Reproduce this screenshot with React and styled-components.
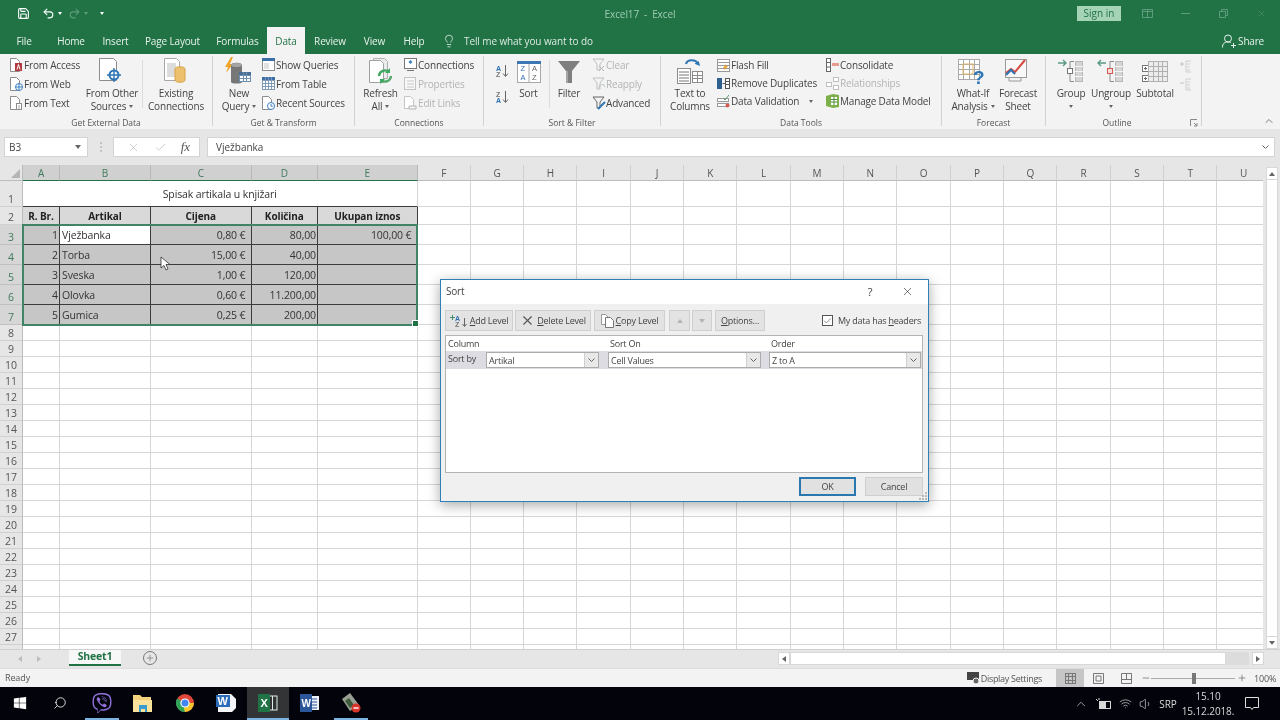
import React from "react";
import styled, { createGlobalStyle } from "styled-components";
import { Lightbulb, Undo2, Redo2, Search, ChevronUp, Wifi, Volume1, X, Check, Plus, Minus, Save } from "lucide-react";
import { FaWindows, FaViber } from "react-icons/fa";

const UI = `"Open Sans", "Noto Sans", sans-serif`;

const Global = createGlobalStyle`
  html, body { margin: 0; padding: 0; background: #fff; overflow: hidden; }
  * { box-sizing: border-box; }
  body { font-family: ${UI}; }
`;

const Page = styled.div`
  position: relative;
  width: 1280px;
  height: 720px;
  display: flex;
  flex-direction: column;
  overflow: hidden;
  color: #444;
  filter: blur(0.3px);
`;

/* title bar */
const TitleBar = styled.div`
  height: 27px;
  background: #217346;
  display: grid;
  grid-template-columns: 1fr auto 1fr;
  align-items: center;
`;
const Qat = styled.div`
  display: flex;
  align-items: center;
  padding-left: 17px;
  color: #fff;
`;
const QatGap = styled.span`
  width: 12px;
`;
const QatCaret = styled.span`
  width: 0;
  height: 0;
  margin: 0 ${(p) => p.$mr || 6}px 0 3px;
  border: 2px solid transparent;
  border-top: 3px solid ${(p) => p.$c || "#fff"};
  border-bottom: 0;
`;
const DocTitle = styled.div`
  font-size: 10px;
  color: #9fcbb2;
  letter-spacing: -0.1px;
`;
const WinBtns = styled.div`
  display: flex;
  align-items: center;
  justify-content: flex-end;
  color: #5d9c7c;
`;
const SignIn = styled.div`
  width: 44px;
  height: 15px;
  margin-right: 7px;
  background: #a4d3b6;
  color: #217346;
  font-size: 10px;
  line-height: 15px;
  text-align: center;
`;
const WinBtn = styled.div`
  width: 38px;
  display: flex;
  justify-content: center;
`;

/* tabs */
const TabBar = styled.div`
  height: 27px;
  background: #217346;
  display: flex;
  align-items: stretch;
`;
const Tab = styled.div`
  width: ${(p) => p.$w}px;
  display: flex;
  align-items: center;
  justify-content: center;
  font-size: 10px;
  letter-spacing: -0.15px;
  color: ${(p) => (p.$active ? "#217346" : "#e8f2ec")};
  background: ${(p) => (p.$active ? "#f3f3f3" : "transparent")};
`;
const TellMe = styled.div`
  display: flex;
  align-items: center;
  gap: 8px;
  padding-left: 8px;
  font-size: 10px;
  letter-spacing: -0.1px;
  color: #dcebe3;
`;
const Share = styled.div`
  margin-left: auto;
  padding-right: 16px;
  display: flex;
  align-items: center;
  gap: 2px;
  font-size: 10px;
  letter-spacing: -0.2px;
  color: #e8f2ec;
`;

/* ribbon */
const Ribbon = styled.div`
  height: 75px;
  background: #f3f3f3;
  display: flex;
  font-size: 10px;
  letter-spacing: -0.18px;
`;
const Group = styled.div`
  width: ${(p) => p.$w}px;
  height: 70px;
  margin-top: 2px;
  display: flex;
  flex-direction: column;
  border-right: 1px solid #d2d2d2;
`;
const GroupBody = styled.div`
  height: 59px;
  flex: none;
  display: flex;
  padding-left: ${(p) => p.$pl || 0}px;
`;
const GroupLabel = styled.div`
  position: relative;
  height: 14px;
  flex: none;
  padding-right: ${(p) => p.$pr || 0}px;
  line-height: 15px;
  text-align: center;
  font-size: 8.5px;
  letter-spacing: 0;
  color: #555;
`;
const Launcher = styled.span`
  position: absolute;
  right: 3px;
  top: 4px;
  display: flex;
`;
const Large = styled.div`
  width: ${(p) => p.$w}px;
  flex: none;
  display: flex;
  flex-direction: column;
  align-items: center;
  text-align: center;
  line-height: 13px;
  color: #444;
  white-space: nowrap;
`;
const LargeIcon = styled.div`
  height: 31px;
  flex: none;
  display: flex;
  align-items: center;
  justify-content: center;
`;
const LabelLine = styled.div`
  height: 13px;
  display: flex;
  align-items: center;
  justify-content: center;
`;
const Caret = styled.span`
  display: inline-block;
  width: 0;
  height: 0;
  margin-left: ${(p) => p.$ml ?? 3}px;
  border: 2px solid transparent;
  border-top: 3px solid #666;
  border-bottom: 0;
`;
const Stack = styled.div`
  width: ${(p) => p.$w}px;
  flex: none;
  margin-left: ${(p) => p.$ml || 0}px;
  margin-top: ${(p) => p.$mt || 0}px;
  display: flex;
  flex-direction: column;
`;
const SmallRow = styled.div`
  height: ${(p) => p.$h || 19}px;
  display: flex;
  align-items: center;
  gap: 1px;
  white-space: nowrap;
  color: ${(p) => (p.$off ? "#b4b4b4" : "#444")};
`;
const SmallIcon = styled.span`
  width: 13px;
  height: 14px;
  flex: none;
  display: flex;
  align-items: center;
  justify-content: center;
`;
const GroupSep = styled.div`
  width: ${(p) => p.$w}px;
  flex: none;
  display: flex;
  justify-content: center;
  &::after {
    content: "";
    width: 1px;
    height: 48px;
    margin-top: 4px;
    background: #dcdcdc;
  }
`;
const SortCol = styled.div`
  width: 13px;
  flex: none;
  display: flex;
  flex-direction: column;
  gap: 12px;
  padding-top: 8px;
`;
const OutlineSmall = styled.div`
  width: 16px;
  flex: none;
  display: flex;
  flex-direction: column;
  gap: 5px;
  padding-top: 4px;
`;
const RibbonEnd = styled.div`
  flex: 1;
  display: flex;
  align-items: flex-end;
  justify-content: flex-end;
  padding: 0 5px 0 0;
  height: 73px;
  color: #555;
`;

/* formula bar */
const FormulaWrap = styled.div`
  height: 36px;
  background: #e6e6e6;
  padding: 8px 5px 8px 4px;
  display: flex;
`;
const NameBox = styled.div`
  width: 84px;
  background: #fff;
  border: 1px solid #d4d4d4;
  font-size: 10px;
  padding: 0 6px 0 4px;
  display: flex;
  align-items: center;
  justify-content: space-between;
`;
const Dots = styled.div`
  width: 25px;
  display: flex;
  flex-direction: column;
  align-items: center;
  justify-content: center;
  gap: 2px;
  & i { width: 2px; height: 2px; background: #c4c4c4; display: block; }
`;
const FuncBox = styled.div`
  width: 87px;
  margin-right: 7px;
  background: #fff;
  border: 1px solid #d4d4d4;
  display: flex;
  align-items: center;
  justify-content: space-around;
  padding: 0 2px 0 6px;
  color: #bcbcbc;
`;
const Fx = styled.span`
  font-family: "Liberation Serif", serif;
  font-style: italic;
  font-size: 13px;
  color: #555;
`;
const FormulaInput = styled.div`
  flex: 1;
  background: #fff;
  border: 1px solid #d4d4d4;
  font-size: 10px;
  padding: 0 5px 0 8px;
  display: flex;
  align-items: center;
  justify-content: space-between;
`;

/* sheet */
const SheetArea = styled.div`
  flex: 1;
  display: flex;
  min-height: 0;
  background: #e6e6e6;
`;
const SheetScroll = styled.div`
  width: 1263px;
  overflow: hidden;
  background: #fff;
`;
const Sheet = styled.div`
  position: relative;
  display: grid;
  grid-template-columns: 23px 37px 91px 100.5px 66.5px 99.5px repeat(16, 53.33px);
  grid-template-rows: 16px 26px 17.5px repeat(5, 20px) repeat(21, 16px);
  font-size: 10.5px;
  letter-spacing: -0.12px;
`;
const ColHead = styled.div`
  background: ${(p) => (p.$sel ? "#d0d0d0" : "#e6e6e6")};
  border-right: 1px solid ${(p) => (p.$sel ? "#b8b8b8" : "#d0d0d0")};
  border-bottom: 1px solid ${(p) => (p.$sel ? "#217346" : "#bcbcbc")};
  color: ${(p) => (p.$sel ? "#3f7a5c" : "#555")};
  font-size: 10px;
  display: flex;
  align-items: center;
  justify-content: center;
`;
const Corner = styled.div`
  background: #e6e6e6;
  border-right: 1px solid #bcbcbc;
  border-bottom: 1px solid #bcbcbc;
  display: flex;
  align-items: flex-end;
  justify-content: flex-end;
  padding: 0 2px 2px 0;
`;
const RowHead = styled.div`
  background: ${(p) => (p.$sel ? "#d6d6d6" : "#e6e6e6")};
  border-right: 1px solid ${(p) => (p.$sel ? "#217346" : "#bcbcbc")};
  border-bottom: 1px solid ${(p) => (p.$sel ? "#c0c0c0" : "#d0d0d0")};
  color: ${(p) => (p.$sel ? "#3f7a5c" : "#555")};
  display: flex;
  align-items: flex-end;
  justify-content: center;
  line-height: 14px;
`;
const Cell = styled.div`
  border-right: 1px solid #d6d6d6;
  border-bottom: 1px solid #d6d6d6;
`;
const TitleCell = styled.div`
  grid-column: span 5;
  display: flex;
  align-items: center;
  justify-content: center;
  color: #333;
  border-bottom: 1px solid #3c3c3c;
  border-right: 1px solid #d6d6d6;
`;
const HeadCell = styled.div`
  background: #d9d9d9;
  border-right: 1px solid #3c3c3c;
  border-bottom: 1px solid #3c3c3c;
  font-size: 10px;
  font-weight: 700;
  color: #222;
  display: flex;
  align-items: center;
  justify-content: center;
  padding-top: 1px;
`;
const DataCell = styled.div`
  background: ${(p) => (p.$active ? "#fff" : "#c6c6c6")};
  border-right: 1px solid #3c3c3c;
  border-bottom: 1px solid #3c3c3c;
  color: #333;
  display: flex;
  align-items: center;
  justify-content: ${(p) => (p.$num ? "flex-end" : "flex-start")};
  padding: 1px ${(p) => (p.$money ? 5 : 1)}px 0 2px;
`;
const Selection = styled.div`
  position: absolute;
  grid-row: 4 / 9;
  grid-column: 2 / 7;
  inset: -1px 0 -1px -1px;
  border: 2px solid #3f8467;
  pointer-events: none;
  &::after {
    content: "";
    position: absolute;
    right: -3px;
    bottom: -3px;
    width: 5px;
    height: 5px;
    background: #217346;
    border: 1px solid #fff;
  }
`;
const VScroll = styled.div`
  flex: 1;
  padding: 2px 2px 0 3px;
  display: flex;
  flex-direction: column;
`;
const VThumb = styled.div`
  flex: 1;
  background: #fff;
  border: 1px solid #d8d8d8;
  border-top: 0;
  border-bottom: 0;
`;
const ArrowBtn = styled.div`
  height: 13px;
  flex: none;
  background: #fff;
  border: 1px solid #d8d8d8;
  display: flex;
  align-items: center;
  justify-content: center;
`;
const Tri = styled.span`
  width: 0;
  height: 0;
  border: 3px solid transparent;
  ${(p) => p.$dir === "up" && `border-top:0;border-bottom:4px solid ${p.$c || "#666"};`}
  ${(p) => p.$dir === "down" && `border-bottom:0;border-top:4px solid ${p.$c || "#666"};`}
  ${(p) => p.$dir === "left" && `border-left:0;border-right:4px solid ${p.$c || "#666"};`}
  ${(p) => p.$dir === "right" && `border-right:0;border-left:4px solid ${p.$c || "#666"};`}
`;

/* sheet tabs */
const SheetBar = styled.div`
  height: 19px;
  background: #e6e6e6;
  border-top: 1px solid #d0d0d0;
  display: flex;
  align-items: stretch;
`;
const TabNav = styled.div`
  width: 69px;
  display: flex;
  align-items: center;
  gap: 15px;
  padding-left: 18px;
`;
const SheetTab = styled.div`
  width: 52px;
  margin-bottom: 2px;
  background: #f7f7f7;
  border-bottom: 2px solid #217346;
  color: #217346;
  font-weight: 700;
  font-size: 10.5px;
  letter-spacing: -0.2px;
  text-align: center;
  line-height: 13px;
`;
const AddSheet = styled.div`
  width: 14px;
  height: 14px;
  margin: 1px 0 0 22px;
  border: 1px solid #777;
  border-radius: 50%;
  color: #666;
  display: flex;
  align-items: center;
  justify-content: center;
`;
const HScroll = styled.div`
  margin: 2px 16px 3px auto;
  width: 486px;
  display: flex;
  align-items: stretch;
`;
const HBtn = styled.div`
  width: 12px;
  margin-left: ${(p) => p.$ml || 0}px;
  background: #fff;
  border: 1px solid #d8d8d8;
  display: flex;
  align-items: center;
  justify-content: center;
`;
const HThumb = styled.div`
  flex: 1;
  background: #fff;
  border: 1px solid #d8d8d8;
`;
const HTrack = styled.div`
  width: 23px;
  background: #dcdcdc;
`;

/* status bar */
const StatusBar = styled.div`
  height: 19px;
  background: #f3f3f3;
  border-top: 1px solid #dcdcdc;
  display: flex;
  align-items: stretch;
  font-size: 9px;
  letter-spacing: -0.12px;
  color: #555;
`;
const Ready = styled.div`
  padding-left: 5px;
  line-height: 18px;
`;
const StatusRight = styled.div`
  margin-left: auto;
  display: flex;
  align-items: center;
`;
const DisplaySet = styled.div`
  display: flex;
  align-items: center;
  gap: 1px;
  margin-right: 14px;
  letter-spacing: -0.3px;
`;
const ViewBtn = styled.div`
  width: 28px;
  height: 18px;
  background: ${(p) => (p.$on ? "#c6c6c6" : "transparent")};
  display: flex;
  align-items: center;
  justify-content: center;
`;
const Slider = styled.div`
  width: 84px;
  height: 1px;
  background: #aaa;
  position: relative;
  margin: 0 2px 0 0;
  & i {
    position: absolute;
    left: 41px;
    top: -5px;
    width: 4px;
    height: 11px;
    background: #777;
  }
`;
const ZoomOut = styled.span`
  display: flex;
  margin-left: 1px;
`;
const Zoom = styled.div`
  width: 33px;
  padding-left: 7px;
`;

/* taskbar */
const Taskbar = styled.div`
  height: 33px;
  background: #03040b;
  display: flex;
  align-items: stretch;
  color: #fff;
`;
const TaskItem = styled.div`
  width: ${(p) => p.$w || 41.5}px;
  flex: none;
  display: flex;
  flex-direction: column;
  align-items: center;
  background: ${(p) => (p.$active ? "#333436" : "transparent")};
`;
const TaskIcon = styled.div`
  flex: 1;
  display: flex;
  align-items: center;
  justify-content: center;
`;
const MirroredSearch = styled(Search)`
  transform: scaleX(-1);
`;
const TaskLine = styled.div`
  height: 2px;
  width: ${(p) => (p.$full ? "100%" : "34px")};
  background: ${(p) => (p.$show ? "#7db4df" : "transparent")};
`;
const Tray = styled.div`
  margin-left: auto;
  display: flex;
  align-items: center;
  color: #d8d8d8;
  font-size: 10px;
`;
const TraySlot = styled.div`
  width: ${(p) => p.$w}px;
  display: flex;
  justify-content: center;
  align-items: center;
`;
const Clock = styled.div`
  width: 56px;
  text-align: center;
  line-height: 15px;
  font-size: 10px;
  letter-spacing: -0.1px;
`;

/* sort dialog */
const Dialog = styled.div`
  position: absolute;
  left: 440px;
  top: 279px;
  width: 489px;
  height: 223px;
  background: #f0f0f0;
  border: 1px solid #2e80b8;
  box-shadow: 0 3px 12px rgba(0, 0, 0, 0.35);
  font-size: 9px;
  letter-spacing: -0.22px;
  color: #444;
  display: flex;
  flex-direction: column;
`;
const DialogTitle = styled.div`
  height: 24px;
  flex: none;
  background: #fff;
  display: flex;
  align-items: center;
  padding: 0 14px 2px 5px;
  font-size: 10px;
  & span:first-child { flex: 1; }
`;
const HelpMark = styled.span`
  width: 20px;
  margin-right: 21px;
  text-align: center;
  font-size: 11px;
`;
const DlgToolbar = styled.div`
  height: 21px;
  flex: none;
  margin: 6px 7px 0 4px;
  display: flex;
  gap: 2px;
  align-items: stretch;
`;
const DlgBtn = styled.div`
  width: ${(p) => p.$w}px;
  margin-left: ${(p) => p.$ml || 0}px;
  flex: none;
  background: #e3e3e3;
  border: 1px solid #cfcfcf;
  display: flex;
  align-items: center;
  justify-content: center;
  gap: 2px;
  white-space: nowrap;
`;
const HeaderCheck = styled.label`
  margin-left: auto;
  display: flex;
  align-items: center;
  gap: 5px;
`;
const CheckBox = styled.span`
  width: 11px;
  height: 11px;
  background: #fff;
  border: 1px solid #555;
  display: flex;
  align-items: center;
  justify-content: center;
`;
const ListBox = styled.div`
  height: 138px;
  flex: none;
  margin: 4px 5px 0 4px;
  background: #fff;
  border: 1px solid #b4b4b4;
`;
const LevelHead = styled.div`
  display: flex;
  height: 15px;
`;
const ColLabel = styled.div`
  width: ${(p) => p.$w}px;
  padding: 1px 0 0 2px;
  line-height: 14px;
`;
const LevelRow = styled.div`
  background: #dcdce2;
  height: 18px;
  display: flex;
  padding-top: 1px;
`;
const RowName = styled.div`
  width: 40px;
  padding-left: 2px;
  line-height: 13px;
`;
const Combo = styled.div`
  width: ${(p) => p.$w}px;
  margin-left: ${(p) => p.$ml || 0}px;
  height: 16px;
  background: #fff;
  border: 1px solid #ababab;
  padding-left: 2px;
  display: flex;
  align-items: center;
  justify-content: space-between;
  & b {
    width: 14px;
    height: 14px;
    background: #e8e8e8;
    border-left: 1px solid #cfcfcf;
    display: flex;
    align-items: center;
    justify-content: center;
    font-weight: 400;
    color: #666;
  }
`;
const DlgFooter = styled.div`
  position: relative;
  flex: 1;
  display: flex;
  justify-content: flex-end;
  gap: 9px;
  padding: 4px 5px 0 0;
`;
const FootBtn = styled.div`
  width: ${(p) => p.$w}px;
  height: 19px;
  background: #e1e1e1;
  border: ${(p) => (p.$def ? "2px solid #2a78ad" : "1px solid #cfcfcf")};
  display: flex;
  align-items: center;
  justify-content: center;
`;
const Grip = styled.svg`
  position: absolute;
  right: 1px;
  bottom: 1px;
`;
const Cursor = styled.svg`
  position: absolute;
  left: 160px;
  top: 256px;
`;

/* drawings */
const Drawing = styled.svg`
  display: block;
  overflow: visible;
`;
const Svg = ({ w, h, children }) => (
  <Drawing width={w} height={h} viewBox={`0 0 ${w} ${h}`}>
    {children}
  </Drawing>
);
const Page2 = ({ x = 0, y = 0, w = 10, h = 13, f = "#fff", s = "#8c8c8c" }) => (
  <path d={`M${x + 0.5} ${y + 0.5}h${w - 3}l3 3v${h - 3}h-${w}z`} fill={f} stroke={s} />
);
const TableGrid = ({ x, y, w, h, cols, rows, s = "#8c8c8c", head, f = "#fff" }) => {
  const lines = [];
  for (let i = 1; i < cols; i++) {
    const px = x + Math.round((w / cols) * i) + 0.5;
    lines.push(<path key={"c" + i} d={`M${px} ${y}v${h}`} stroke={s} />);
  }
  for (let i = 1; i < rows; i++) {
    const py = y + Math.round((h / rows) * i) + 0.5;
    lines.push(<path key={"r" + i} d={`M${x} ${py}h${w}`} stroke={s} />);
  }
  return (
    <g>
      <rect x={x + 0.5} y={y + 0.5} width={w} height={h} fill={f} stroke={s} />
      {head && <rect x={x} y={y} width={w + 1} height={3} fill={head} />}
      {lines}
    </g>
  );
};
const Funnel = ({ c = "#8a8a8a" }) => <path d="M1 1h11L8 6v6H5V6z" fill="none" stroke={c} />;
const FromAccessIcon = () => (
  <Svg w={13} h={14}><Page2 w={9} h={13} /><rect x="5" y="5" width="7" height="8" fill="#b23a3f" /><path d="M7 11.5l1.5-5 1.5 5" stroke="#fff" fill="none" /></Svg>
);
const FromWebIcon = () => (
  <Svg w={13} h={14}><Page2 w={9} h={13} /><circle cx="9" cy="10" r="3.5" fill="#fff" stroke="#3b7ec0" /><path d="M5.5 10h7M9 6.5v7" stroke="#3b7ec0" /></Svg>
);
const FromTextIcon = () => (
  <Svg w={13} h={14}><Page2 w={9} h={13} /><rect x="6.5" y="7.5" width="5" height="6" fill="#fff" stroke="#8c8c8c" /><path d="M8 10h2M8 12h2" stroke="#aaa" /></Svg>
);
const FromOtherIcon = () => (
  <Svg w={28} h={30}>
    <Page2 x={1} y={1} w={17} h={22} />
    <circle cx="16" cy="18" r="4.5" fill="#fff" stroke="#2e75b5" strokeWidth="2" />
    <path d="M16 11v14M9 18h14" stroke="#2e75b5" strokeWidth="1.4" />
  </Svg>
);
const ExistingIcon = () => (
  <Svg w={26} h={30}>
    <Page2 x={1} y={1} w={15} h={22} s="#a8a8a8" />
    <rect x="4" y="6" width="9" height="14" fill="#dcdcdc" />
    <path d="M12 12c0-3 10-3 10 0v11c0 3-10 3-10 0z" fill="#edc06e" stroke="#d7a248" />
  </Svg>
);
const NewQueryIcon = () => (
  <Svg w={30} h={30}>
    <path d="M7 0L1 10h3l-2 6 7-9H6l3-7z" fill="#eea62a" />
    <path d="M7 8c0-3 11-3 11 0v17c0 2-11 2-11 0z" fill="#777" />
    <ellipse cx="12.5" cy="8" rx="5.5" ry="2" fill="#a5a5a5" />
    <TableGrid x={15} y={15} w={11} h={9} cols={3} rows={3} s="#6d8fb0" head="#4a6f96" />
  </Svg>
);
const ShowQueriesIcon = () => (
  <Svg w={13} h={13}><rect x=".5" y=".5" width="12" height="12" fill="#fff" stroke="#8c8c8c" /><rect x="0" y="0" width="13" height="3" fill="#3b6ea5" /><rect x="2" y="5" width="5" height="6" fill="#e2e2e2" /></Svg>
);
const FromTableIcon = () => <Svg w={13} h={13}><TableGrid x={0} y={0} w={12} h={12} cols={4} rows={4} s="#7f9ab8" head="#3b6ea5" /></Svg>;
const RecentIcon = () => (
  <Svg w={13} h={14}><Page2 w={9} h={13} /><circle cx="9" cy="10" r="3.5" fill="#fff" stroke="#3b7ec0" /><path d="M9 8v2.2h1.8" stroke="#3b7ec0" fill="none" /></Svg>
);
const RefreshIcon = () => (
  <Svg w={26} h={30}>
    <Page2 x={5} y={1} w={14} h={20} s="#b0b0b0" f="#ececec" />
    <Page2 x={1} y={3} w={14} h={22} s="#a0a0a0" />
    <path d="M11 19a6 6 0 0 1 10-4" fill="none" stroke="#3fa85f" strokeWidth="2.4" />
    <path d="M23 19a6 6 0 0 1-10 4" fill="none" stroke="#52a86b" strokeWidth="2.4" />
    <path d="M22 11v5h-5zM12 27v-5h5z" fill="#3fa85f" />
  </Svg>
);
const ConnIcon = () => (
  <Svg w={13} h={13}><rect x=".5" y=".5" width="12" height="10" fill="#fff" stroke="#777" /><path d="M6.5 2l2 2-2 2-2-2z" fill="#3b7ec0" /><path d="M3 12.5h7" stroke="#777" /></Svg>
);
const PropIcon = () => (
  <Svg w={13} h={13}><rect x=".5" y=".5" width="11" height="12" fill="#f8f8f8" stroke="#c4c4c4" /><path d="M3 4h7M3 7h7M3 10h7" stroke="#c8c8c8" /></Svg>
);
const EditLinksIcon = () => (
  <Svg w={13} h={14}><Page2 w={9} h={12} s="#c4c4c4" /><path d="M5 10h7v3H5z" fill="#f3f3f3" stroke="#b4b4b4" /></Svg>
);
const Letters = ({ a, b, up, x = 0 }) => (
  <g fontFamily="Liberation Sans, sans-serif" fontSize="7" fontWeight="700">
    <text x={x} y="6.5" fill={up ? "#777" : "#2f6fb5"}>{a}</text>
    <text x={x} y="13" fill={up ? "#2f6fb5" : "#777"}>{b}</text>
  </g>
);
const SortAZ = ({ z }) => (
  <Svg w={14} h={14}>
    <Letters a={z ? "Z" : "A"} b={z ? "A" : "Z"} up={z} />
    <path d="M9.5 1v11M7 9.5l2.5 3 2.5-3" fill="none" stroke="#666" />
  </Svg>
);
const SortLarge = () => (
  <Svg w={24} h={22}>
    <rect x=".5" y=".5" width="23" height="21" fill="#fff" stroke="#a8a8a8" />
    <rect x="0" y="0" width="24" height="3" fill="#3d77b3" />
    <path d="M12 3v19" stroke="#a8a8a8" />
    <g fontFamily="Liberation Sans, sans-serif" fontSize="7.5">
      <text x="3.5" y="10" fill="#2f6fb5">Z</text><text x="3.5" y="19" fill="#2f6fb5">A</text>
      <text x="15" y="10" fill="#666">A</text><text x="15" y="19" fill="#666">Z</text>
    </g>
  </Svg>
);
const FilterLarge = () => (
  <Svg w={24} h={24}>
    <path d="M1 1h22L15 11v12H9V11z" fill="#7f7f7f" />
    <path d="M9 11h2v12H9z" fill="#a5a5a5" />
  </Svg>
);
const ClearIcon = () => (
  <Svg w={14} h={14}><Funnel c="#c0c0c0" /><path d="M7 8l5 5M12 8l-5 5" stroke="#b4b4b4" /></Svg>
);
const ReapplyIcon = () => (
  <Svg w={14} h={14}><Funnel c="#c0c0c0" /><path d="M7 11a3 3 0 0 1 6-1" fill="none" stroke="#b8c8b8" /></Svg>
);
const AdvancedIcon = () => (
  <Svg w={14} h={14}><Funnel c="#666" /><path d="M6 13l7-7" stroke="#2e75b5" strokeWidth="2" /></Svg>
);
const TextColumnsIcon = () => (
  <Svg w={30} h={30}>
    <path d="M11 7c1-5 10-5 12 0" fill="none" stroke="#2e75b5" strokeWidth="2" />
    <path d="M20 8h6l-3-4z" fill="#2e75b5" transform="rotate(20 23 6)" />
    <rect x="2.5" y="11.5" width="13" height="15" fill="#fff" stroke="#8c8c8c" />
    <path d="M4 15h10M4 18h10M4 21h10M4 24h10" stroke="#777" />
    <TableGrid x={17} y={14} w={10} h={11} cols={2} rows={3} s="#8c8c8c" />
  </Svg>
);
const FlashIcon = () => (
  <Svg w={13} h={13}><TableGrid x={0} y={0} w={12} h={12} cols={1} rows={4} s="#999" /><path d="M9 5L6 9h2l-1 3 4-5H9z" fill="#eea62a" /></Svg>
);
const RemoveDupIcon = () => (
  <Svg w={13} h={13}><rect x="0" y="1" width="5" height="11" fill="#2f5f8f" /><rect x="8.5" y="1.5" width="4" height="10" fill="#fff" stroke="#555" /><path d="M9 4.5h3M9 7.5h3M5.5 6.5h3" stroke="#555" /></Svg>
);
const ValidationIcon = () => (
  <Svg w={13} h={13}><rect x=".5" y="3.5" width="11" height="3" fill="#fff" stroke="#999" /><rect x=".5" y="8.5" width="11" height="3" fill="#fff" stroke="#999" /><path d="M6 3l2 2 4-5" fill="none" stroke="#55a06e" /><circle cx="10.5" cy="10.5" r="2" fill="#d75b4c" /></Svg>
);
const ConsolidateIcon = () => (
  <Svg w={13} h={14}><rect x=".5" y=".5" width="4" height="13" fill="#fff" stroke="#666" /><path d="M1 4.5h3M1 9h3" stroke="#666" /><rect x="6" y="5" width="7" height="3" fill="#e69b93" /></Svg>
);
const RelationIcon = () => (
  <Svg w={13} h={13}><rect x=".5" y="5.5" width="5" height="4" fill="#fff" stroke="#c0c0c0" /><rect x="7.5" y=".5" width="5" height="4" fill="#fff" stroke="#c0c0c0" /><rect x="7.5" y="8.5" width="5" height="4" fill="#fff" stroke="#c0c0c0" /></Svg>
);
const ModelIcon = () => (
  <Svg w={13} h={14}><path d="M0 2l7-2 6 1v12l-6 1-7-2z" fill="#7db04b" /><rect x="5" y="3" width="6" height="8" fill="#fff" /><path d="M5 5.5h6M5 8h6M8 3v8" stroke="#4d8a3a" /></Svg>
);
const WhatIfIcon = () => (
  <Svg w={30} h={30}>
    <TableGrid x={0} y={2} w={21} h={20} cols={4} rows={4} s="#a8a8a8" />
    <rect x="5" y="7" width="10" height="10" fill="none" stroke="#e5b567" />
    <text x="15" y="27" fontFamily="Liberation Sans, sans-serif" fontSize="19" fontWeight="700" fill="#2e75b5">?</text>
  </Svg>
);
const ForecastIcon = () => (
  <Svg w={26} h={28}>
    <rect x=".5" y="1.5" width="21" height="18" fill="#f8f8f8" stroke="#9a9a9a" />
    <path d="M1 15l5-4 4 3 5-6 5-6" fill="none" stroke="#d24b3e" strokeWidth="2" />
    <path d="M1 17l5-5 4 4" fill="none" stroke="#2e75b5" strokeWidth="2" />
    <path d="M4 20v3h12v-3" fill="none" stroke="#9a9a9a" />
  </Svg>
);
const Beads = ({ x }) => (
  <g>
    <rect x={x + 0.5} y="1.5" width="7" height="20" fill="#d5d5d5" stroke="#b8b8b8" />
    <path d={`M${x} 6.5h8M${x} 11.5h8M${x} 16.5h8`} stroke="#f3f3f3" />
  </g>
);
const GroupIcon = () => (
  <Svg w={26} h={24}>
    <path d="M0 3h8M5 0l3 3-3 3" fill="none" stroke="#5b9a86" strokeWidth="1.4" />
    <path d="M16 1.5h-4v20h4" fill="none" stroke="#8c8c8c" />
    <rect x="9.5" y="8.5" width="5" height="5" fill="#fff" stroke="#777" />
    <Beads x={17} />
  </Svg>
);
const UngroupIcon = () => (
  <Svg w={26} h={24}>
    <path d="M8 3H0M3 0L0 3l3 3" fill="none" stroke="#5b9a86" strokeWidth="1.4" />
    <path d="M16 1.5h-4v20h4" fill="none" stroke="#8c8c8c" />
    <rect x="9.5" y="8.5" width="5" height="5" fill="#f8dede" stroke="#d0584d" />
    <Beads x={17} />
  </Svg>
);
const SubtotalIcon = () => (
  <Svg w={26} h={24}>
    <rect x="0.5" y="5.5" width="6" height="6" fill="#fff" stroke="#777" />
    <rect x="0.5" y="15.5" width="6" height="6" fill="#fff" stroke="#777" />
    <TableGrid x={6} y={1} w={19} h={20} cols={4} rows={4} s="#b0b0b0" f="#ececec" />
    <path d="M2 8.5h3M3.5 7v3M2 18.5h3M3.5 17v3" stroke="#666" />
  </Svg>
);
const DetailIcon = ({ minus }) => (
  <Svg w={13} h={13}>
    <path d={minus ? "M1 5h4" : "M1 4h4M3 2v4"} stroke="#c4c4c4" />
    <path d="M12 1H7v11h5M8 4h3M8 7h3M8 10h3" fill="none" stroke="#cfcfcf" />
  </Svg>
);
const ChromeIcon = () => (
  <Svg w={20} h={20}>
    <circle cx="10" cy="10" r="9" fill="#e0473b" />
    <path d="M10 10L2.2 5.5A9 9 0 0 0 10 19l4.5-7.8z" fill="#2fa35a" />
    <path d="M10 10h9a9 9 0 0 1-9 9l-1-3z" fill="#f6c62c" />
    <circle cx="10" cy="10" r="4.6" fill="#fff" />
    <circle cx="10" cy="10" r="3.5" fill="#4285f4" />
  </Svg>
);
const FolderIcon = () => (
  <Svg w={20} h={18}>
    <path d="M0 1h7l2 2h9v15H0z" fill="#f4d27b" />
    <rect x="0" y="6" width="19" height="12" fill="#fbe29a" />
    <path d="M6 11h8v7h-2v-3H8v3H6z" fill="#3a9bd0" />
  </Svg>
);
const WordOldIcon = () => (
  <Svg w={20} h={18}>
    <path d="M2 0h13l5 5v9l-4 4H2z" fill="#f4f6fa" />
    <rect x="0" y="1" width="14" height="12" fill="#2b6cb8" />
    <text x="1.5" y="11" fontFamily="Liberation Sans, sans-serif" fontSize="11" fontWeight="700" fill="#fff">W</text>
  </Svg>
);
const ExcelIcon = () => (
  <Svg w={19} h={18}>
    <rect x="10" y="2" width="9" height="14" fill="none" stroke="#dfeee5" />
    <path d="M14.5 2v14" stroke="#dfeee5" />
    <rect x="0" y="0" width="12" height="18" fill="#1f7345" />
    <text x="2.5" y="13" fontFamily="Liberation Sans, sans-serif" fontSize="11" fontWeight="700" fill="#fff">X</text>
  </Svg>
);
const WordIcon = () => (
  <Svg w={19} h={18}>
    <rect x="9" y="2" width="10" height="14" fill="#eef2f8" />
    <path d="M11 5h6M11 8h6M11 11h6M11 14h6" stroke="#2b579a" />
    <rect x="0" y="0" width="12" height="18" fill="#2b579a" />
    <text x="1.5" y="13" fontFamily="Liberation Sans, sans-serif" fontSize="10" fontWeight="700" fill="#fff">W</text>
  </Svg>
);
const AppIcon = () => (
  <Svg w={20} h={20}>
    <path d="M9 0l9 12-9 6-8-12z" fill="#9a9f93" />
    <path d="M8 5l5 7-4 3-5-7z" fill="#3c5a3a" />
    <circle cx="15" cy="15" r="4.5" fill="#d9352b" />
    <path d="M12.5 15h5" stroke="#fff" strokeWidth="1.4" />
  </Svg>
);
const BatteryIcon = () => (
  <Svg w={15} h={12}>
    <rect x="3.5" y="3.5" width="11" height="7" fill="none" stroke="#d8d8d8" />
    <rect x="4" y="4" width="6" height="6" fill="#d8d8d8" />
    <path d="M0 1l2 2M3 0v2" stroke="#d8d8d8" />
  </Svg>
);
const NotifyIcon = () => (
  <Svg w={14} h={14}><path d="M.5.5h13v10H8.5L7 12.5 5.5 10.5h-5z" fill="none" stroke="#e0e0e0" /></Svg>
);
const ChevronSm = () => (
  <Svg w={7} h={4}><path d="M.5.5L3.5 3.5 6.5.5" fill="none" stroke="#666" /></Svg>
);

const COLS = "ABCDEFGHIJKLMNOPQRSTU".split("");
const HEADERS = ["R. Br.", "Artikal", "Cijena", "Količina", "Ukupan iznos"];
const DATA = [
  ["1", "Vježbanka", "0,80 €", "80,00", "100,00 €"],
  ["2", "Torba", "15,00 €", "40,00", ""],
  ["3", "Sveska", "1,00 €", "120,00", ""],
  ["4", "Olovka", "0,60 €", "11.200,00", ""],
  ["5", "Gumica", "0,25 €", "200,00", ""],
];

const blanks = (row, from = 0) =>
  COLS.slice(from).map((c) => <Cell key={c + row} />);

function Grid() {
  const rows = [];
  for (let r = 8; r <= 28; r++) {
    rows.push(
      <React.Fragment key={r}>
        <RowHead>{r <= 27 ? r : ""}</RowHead>
        {blanks(r)}
      </React.Fragment>
    );
  }
  return (
    <Sheet>
      <Corner>
        <Svg w={9} h={9}><path d="M9 0v9H0z" fill="#b4b4b4" /></Svg>
      </Corner>
      {COLS.map((c, i) => (
        <ColHead key={c} $sel={i < 5}>{c}</ColHead>
      ))}
      <RowHead>1</RowHead>
      <TitleCell>Spisak artikala u knjižari</TitleCell>
      {blanks(1, 5)}
      <RowHead>2</RowHead>
      {HEADERS.map((h) => (
        <HeadCell key={h}>{h}</HeadCell>
      ))}
      {blanks(2, 5)}
      {DATA.map((d, i) => (
        <React.Fragment key={d[0]}>
          <RowHead $sel>{i + 3}</RowHead>
          {d.map((v, j) => (
            <DataCell key={j} $num={j !== 1} $money={v.includes("€")} $active={i === 0 && j === 1}>{v}</DataCell>
          ))}
          {blanks(i + 3, 5)}
        </React.Fragment>
      ))}
      {rows}
      <Selection />
    </Sheet>
  );
}

const Small = ({ icon, off, h, children }) => (
  <SmallRow $off={off} $h={h}>
    <SmallIcon>{icon}</SmallIcon>
    {children}
  </SmallRow>
);

function RibbonBar() {
  return (
    <Ribbon>
      <Group $w={213}>
        <GroupBody $pl={10}>
          <Stack $w={76} $mt={-1}>
            <Small icon={<FromAccessIcon />}>From Access</Small>
            <Small icon={<FromWebIcon />}>From Web</Small>
            <Small icon={<FromTextIcon />}>From Text</Small>
          </Stack>
          <Large $w={52}>
            <LargeIcon><FromOtherIcon /></LargeIcon>
            <LabelLine>From Other</LabelLine>
            <LabelLine>Sources<Caret /></LabelLine>
          </Large>
          <GroupSep $w={8} />
          <Large $w={60}>
            <LargeIcon><ExistingIcon /></LargeIcon>
            <LabelLine>Existing</LabelLine>
            <LabelLine>Connections</LabelLine>
          </Large>
        </GroupBody>
        <GroupLabel>Get External Data</GroupLabel>
      </Group>
      <Group $w={142}>
        <GroupBody $pl={3}>
          <Large $w={46}>
            <LargeIcon><NewQueryIcon /></LargeIcon>
            <LabelLine>New</LabelLine>
            <LabelLine>Query<Caret /></LabelLine>
          </Large>
          <Stack $w={90} $mt={-1}>
            <Small icon={<ShowQueriesIcon />}>Show Queries</Small>
            <Small icon={<FromTableIcon />}>From Table</Small>
            <Small icon={<RecentIcon />}>Recent Sources</Small>
          </Stack>
        </GroupBody>
        <GroupLabel>Get &amp; Transform</GroupLabel>
      </Group>
      <Group $w={129}>
        <GroupBody $pl={2}>
          <Large $w={47}>
            <LargeIcon><RefreshIcon /></LargeIcon>
            <LabelLine>Refresh</LabelLine>
            <LabelLine>All<Caret /></LabelLine>
          </Large>
          <Stack $w={76} $mt={-1}>
            <Small icon={<ConnIcon />}>Connections</Small>
            <Small icon={<PropIcon />} off>Properties</Small>
            <Small icon={<EditLinksIcon />} off>Edit Links</Small>
          </Stack>
        </GroupBody>
        <GroupLabel>Connections</GroupLabel>
      </Group>
      <Group $w={177}>
        <GroupBody $pl={12}>
          <SortCol>
            <SortAZ />
            <SortAZ z />
          </SortCol>
          <Large $w={39}>
            <LargeIcon><SortLarge /></LargeIcon>
            <LabelLine>Sort</LabelLine>
          </Large>
          <GroupSep $w={2} />
          <Large $w={38}>
            <LargeIcon><FilterLarge /></LargeIcon>
            <LabelLine>Filter</LabelLine>
          </Large>
          <Stack $w={66} $ml={4} $mt={-1}>
            <Small icon={<ClearIcon />} off>Clear</Small>
            <Small icon={<ReapplyIcon />} off>Reapply</Small>
            <Small icon={<AdvancedIcon />}>Advanced</Small>
          </Stack>
        </GroupBody>
        <GroupLabel>Sort &amp; Filter</GroupLabel>
      </Group>
      <Group $w={281}>
        <GroupBody $pl={4}>
          <Large $w={50}>
            <LargeIcon><TextColumnsIcon /></LargeIcon>
            <LabelLine>Text to</LabelLine>
            <LabelLine>Columns</LabelLine>
          </Large>
          <Stack $w={109} $ml={2}>
            <Small h={18} icon={<FlashIcon />}>Flash Fill</Small>
            <Small h={18} icon={<RemoveDupIcon />}>Remove Duplicates</Small>
            <Small h={18} icon={<ValidationIcon />}>Data Validation<Caret $ml={9} /></Small>
          </Stack>
          <Stack $w={112}>
            <Small h={18} icon={<ConsolidateIcon />}>Consolidate</Small>
            <Small h={18} icon={<RelationIcon />} off>Relationships</Small>
            <Small h={18} icon={<ModelIcon />}>Manage Data Model</Small>
          </Stack>
        </GroupBody>
        <GroupLabel>Data Tools</GroupLabel>
      </Group>
      <Group $w={104}>
        <GroupBody $pl={6}>
          <Large $w={50}>
            <LargeIcon><WhatIfIcon /></LargeIcon>
            <LabelLine>What-If</LabelLine>
            <LabelLine>Analysis<Caret /></LabelLine>
          </Large>
          <Large $w={40}>
            <LargeIcon><ForecastIcon /></LargeIcon>
            <LabelLine>Forecast</LabelLine>
            <LabelLine>Sheet</LabelLine>
          </Large>
        </GroupBody>
        <GroupLabel>Forecast</GroupLabel>
      </Group>
      <Group $w={156}>
        <GroupBody $pl={5}>
          <Large $w={40}>
            <LargeIcon><GroupIcon /></LargeIcon>
            <LabelLine>Group</LabelLine>
            <LabelLine><Caret $ml={0} /></LabelLine>
          </Large>
          <Large $w={40}>
            <LargeIcon><UngroupIcon /></LargeIcon>
            <LabelLine>Ungroup</LabelLine>
            <LabelLine><Caret $ml={0} /></LabelLine>
          </Large>
          <Large $w={48}>
            <LargeIcon><SubtotalIcon /></LargeIcon>
            <LabelLine>Subtotal</LabelLine>
          </Large>
          <OutlineSmall>
            <DetailIcon />
            <DetailIcon minus />
          </OutlineSmall>
        </GroupBody>
        <GroupLabel $pr={13}>
          Outline
          <Launcher>
            <Svg w={8} h={8}><path d="M.5 7V.5H7M4 4l3 3M7 4v3H4" fill="none" stroke="#888" /></Svg>
          </Launcher>
        </GroupLabel>
      </Group>
      <RibbonEnd><ChevronUp size={12} strokeWidth={1.5} /></RibbonEnd>
    </Ribbon>
  );
}

function SortDialog() {
  return (
    <Dialog>
      <DialogTitle>
        <span>Sort</span>
        <HelpMark>?</HelpMark>
        <X size={13} strokeWidth={1.2} color="#333" />
      </DialogTitle>
      <DlgToolbar>
        <DlgBtn $w={68}>
          <Svg w={18} h={14}>
            <path d="M2.5 1v5M0 3.5h5" stroke="#3f8f6f" />
            <Letters a="A" b="Z" x={5} />
            <path d="M14.5 4v8M12.5 10l2 2.5 2-2.5" fill="none" stroke="#666" />
          </Svg>
          <span><u>A</u>dd Level</span>
        </DlgBtn>
        <DlgBtn $w={76}>
          <X size={15} strokeWidth={1.8} color="#555" />
          <span><u>D</u>elete Level</span>
        </DlgBtn>
        <DlgBtn $w={71} $ml={1}>
          <Svg w={13} h={13}><Page2 x={0} y={0} w={7} h={10} s="#999" /><Page2 x={4} y={3} w={8} h={10} s="#777" /></Svg>
          <span><u>C</u>opy Level</span>
        </DlgBtn>
        <DlgBtn $w={21} $ml={2}><Tri $dir="up" $c="#b4b4b4" /></DlgBtn>
        <DlgBtn $w={20}><Tri $dir="down" $c="#b4b4b4" /></DlgBtn>
        <DlgBtn $w={50} $ml={1}><span><u>O</u>ptions...</span></DlgBtn>
        <HeaderCheck>
          <CheckBox><Check size={10} strokeWidth={1.5} color="#333" /></CheckBox>
          <span>My data has <u>h</u>eaders</span>
        </HeaderCheck>
      </DlgToolbar>
      <ListBox>
        <LevelHead>
          <ColLabel $w={162}>Column</ColLabel>
          <ColLabel $w={161}>Sort On</ColLabel>
          <ColLabel $w={150}>Order</ColLabel>
        </LevelHead>
        <LevelRow>
          <RowName>Sort by</RowName>
          <Combo $w={113}>Artikal<b><ChevronSm /></b></Combo>
          <Combo $w={153} $ml={9}>Cell Values<b><ChevronSm /></b></Combo>
          <Combo $w={152} $ml={8}>Z to A<b><ChevronSm /></b></Combo>
        </LevelRow>
      </ListBox>
      <DlgFooter>
        <FootBtn $w={57} $def>OK</FootBtn>
        <FootBtn $w={58}>Cancel</FootBtn>
        <Grip width="8" height="8" viewBox="0 0 8 8">
          <path d="M6 0h2v2H6zM3 3h2v2H3zM6 3h2v2H6zM0 6h2v2H0zM3 6h2v2H3zM6 6h2v2H6z" fill="#b8b8b8" />
        </Grip>
      </DlgFooter>
    </Dialog>
  );
}

export default function App() {
  return (
    <Page>
      <Global />
      <TitleBar>
        <Qat>
          <Save size={13} strokeWidth={2} />
          <QatGap />
          <Undo2 size={13} strokeWidth={2} />
          <QatCaret />
          <Redo2 size={13} strokeWidth={2} color="#5d9d7c" />
          <QatCaret $c="#5d9d7c" $mr={9} />
          <QatCaret />
        </Qat>
        <DocTitle>Excel17 &nbsp;-&nbsp; Excel</DocTitle>
        <WinBtns>
          <SignIn>Sign in</SignIn>
          <WinBtn>
            <Svg w={11} h={9}><path d="M.5.5h10v8H.5zM5.5.5v8M1 2.5h9" fill="none" stroke="currentColor" /></Svg>
          </WinBtn>
          <WinBtn><Svg w={9} h={1}><path d="M0 .5h9" stroke="currentColor" /></Svg></WinBtn>
          <WinBtn>
            <Svg w={9} h={9}><path d="M.5 2.5h6v6h-6zM2.5 2.5v-2h6v6h-2" fill="none" stroke="currentColor" /></Svg>
          </WinBtn>
          <WinBtn><X size={11} strokeWidth={1} /></WinBtn>
        </WinBtns>
      </TitleBar>
      <TabBar>
        <Tab $w={48}>File</Tab>
        <Tab $w={46}>Home</Tab>
        <Tab $w={43}>Insert</Tab>
        <Tab $w={71}>Page Layout</Tab>
        <Tab $w={59}>Formulas</Tab>
        <Tab $w={38} $active>Data</Tab>
        <Tab $w={50}>Review</Tab>
        <Tab $w={39}>View</Tab>
        <Tab $w={40}>Help</Tab>
        <TellMe>
          <Lightbulb size={14} strokeWidth={1.4} />
          Tell me what you want to do
        </TellMe>
        <Share>
          <Svg w={14} h={14}>
            <circle cx="6" cy="4.5" r="3.5" fill="none" stroke="#e8f2ec" />
            <path d="M.5 13.5c0-4 2-5.5 5.5-5.5 1 0 2 .2 2.7.6M9 11.5h5M11.5 9v5" fill="none" stroke="#e8f2ec" />
          </Svg>
          Share
        </Share>
      </TabBar>
      <RibbonBar />
      <FormulaWrap>
        <NameBox>B3<Tri $dir="down" /></NameBox>
        <Dots><i /><i /><i /></Dots>
        <FuncBox>
          <X size={13} strokeWidth={1.3} />
          <Check size={13} strokeWidth={1.3} />
          <Fx>fx</Fx>
        </FuncBox>
        <FormulaInput>
          Vježbanka
          <ChevronSm />
        </FormulaInput>
      </FormulaWrap>
      <SheetArea>
        <SheetScroll><Grid /></SheetScroll>
        <VScroll>
          <ArrowBtn><Tri $dir="up" /></ArrowBtn>
          <VThumb />
          <ArrowBtn><Tri $dir="down" /></ArrowBtn>
        </VScroll>
      </SheetArea>
      <SheetBar>
        <TabNav>
          <Tri $dir="left" $c="#bcbcbc" />
          <Tri $dir="right" $c="#bcbcbc" />
        </TabNav>
        <SheetTab>Sheet1</SheetTab>
        <AddSheet><Plus size={10} strokeWidth={1.5} /></AddSheet>
        <HScroll>
          <HBtn><Tri $dir="left" /></HBtn>
          <HThumb />
          <HTrack />
          <HBtn $ml={3}><Tri $dir="right" /></HBtn>
        </HScroll>
      </SheetBar>
      <StatusBar>
        <Ready>Ready</Ready>
        <StatusRight>
          <DisplaySet>
            <Svg w={13} h={12}>
              <rect x="0" y="0" width="12" height="8" fill="#444" />
              <circle cx="9" cy="9" r="3" fill="#666" stroke="#f3f3f3" />
            </Svg>
            Display Settings
          </DisplaySet>
          <ViewBtn $on>
            <Svg w={11} h={11}><TableGrid x={0} y={0} w={10} h={10} cols={3} rows={3} s="#777" f="none" /></Svg>
          </ViewBtn>
          <ViewBtn>
            <Svg w={11} h={11}><path d="M.5.5h10v10H.5zM3 3h5v5H3z" fill="none" stroke="#777" /></Svg>
          </ViewBtn>
          <ViewBtn>
            <Svg w={11} h={11}><path d="M.5.5h10v10H.5zM.5 6.5h10M5.5.5v6" fill="none" stroke="#777" /></Svg>
          </ViewBtn>
          <ZoomOut><Minus size={10} strokeWidth={1.5} /></ZoomOut>
          <Slider><i /></Slider>
          <Plus size={10} strokeWidth={1.5} />
          <Zoom>100%</Zoom>
        </StatusRight>
      </StatusBar>
      <Taskbar>
        <TaskItem $w={39.5}><TaskIcon><FaWindows size={14} /></TaskIcon><TaskLine /></TaskItem>
        <TaskItem><TaskIcon><MirroredSearch size={14} strokeWidth={1.4} /></TaskIcon><TaskLine /></TaskItem>
        <TaskItem><TaskIcon><FaViber size={20} color="#8f6fd8" /></TaskIcon><TaskLine $show /></TaskItem>
        <TaskItem><TaskIcon><FolderIcon /></TaskIcon><TaskLine /></TaskItem>
        <TaskItem><TaskIcon><ChromeIcon /></TaskIcon><TaskLine /></TaskItem>
        <TaskItem><TaskIcon><WordOldIcon /></TaskIcon><TaskLine /></TaskItem>
        <TaskItem $active><TaskIcon><ExcelIcon /></TaskIcon><TaskLine $show $full /></TaskItem>
        <TaskItem><TaskIcon><WordIcon /></TaskIcon><TaskLine /></TaskItem>
        <TaskItem><TaskIcon><AppIcon /></TaskIcon><TaskLine $show /></TaskItem>
        <Tray>
          <TraySlot $w={22}><ChevronUp size={14} strokeWidth={1.2} /></TraySlot>
          <TraySlot $w={22}><BatteryIcon /></TraySlot>
          <TraySlot $w={22}><Wifi size={13} strokeWidth={1.3} /></TraySlot>
          <TraySlot $w={20}><Volume1 size={14} strokeWidth={1.2} /></TraySlot>
          <TraySlot $w={24}>SRP</TraySlot>
          <Clock>15.10<br />15.12.2018.</Clock>
          <TraySlot $w={31}><NotifyIcon /></TraySlot>
          <TraySlot $w={13} />
        </Tray>
      </Taskbar>
      <SortDialog />
      <Cursor width="12" height="16" viewBox="0 0 12 16">
        <path d="M1 1v11l3-2.5 2 4.5 2-1-2-4.5h4z" fill="#fff" stroke="#333" strokeWidth="0.8" />
      </Cursor>
    </Page>
  );
}
